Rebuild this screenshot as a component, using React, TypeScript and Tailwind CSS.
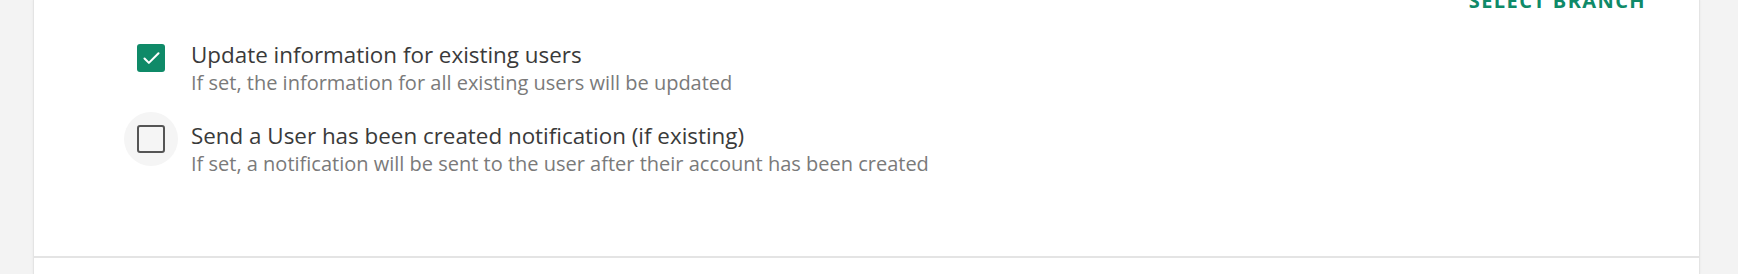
import { Check } from "lucide-react";

const options = [
  {
    id: "update",
    label: "Update information for existing users",
    hint: "If set, the information for all existing users will be updated",
    checked: true,
  },
  {
    id: "notify",
    label: "Send a User has been created notification (if existing)",
    hint: "If set, a notification will be sent to the user after their account has been created",
    checked: false,
  },
];

export default function App() {
  return (
    <div className="h-[274px] overflow-hidden bg-[#f3f3f3] pl-[33px] pr-[38px] font-['Open_Sans',sans-serif]">
      <div className="flex h-[274px] flex-col border-x border-[#e4e4e4] bg-white shadow-[0_0_2px_rgba(0,0,0,0.06)]">
        {/* header action, mostly scrolled off */}
        <div className="-mt-[11px] flex h-[24px] justify-end pr-[53px]">
          <span className="text-[20px] font-bold leading-[24px] tracking-[0.07em] text-[#0f8a68]">
            SELECT BRANCH
          </span>
        </div>

        <div className="mt-[18px] flex flex-col gap-[15px] pl-[90px]">
          {options.map((opt) => (
            <div key={opt.id} className="flex items-start gap-[13px]">
              <div
                className={`flex h-[54px] w-[54px] shrink-0 items-center justify-center rounded-full ${
                  opt.checked ? "" : "bg-[#f5f5f5]"
                }`}
              >
                {opt.checked ? (
                  <div className="flex h-[28px] w-[28px] items-center justify-center rounded-[3px] bg-[#0f8a68]">
                    <Check className="h-[21px] w-[21px] text-white" strokeWidth={2.4} />
                  </div>
                ) : (
                  <div className="h-[28px] w-[28px] rounded-[3px] border-2 border-[#555]" />
                )}
              </div>
              <div className="mt-[10px]">
                <div className="text-[22.4px] leading-[28px] text-[#3a3a3a]">{opt.label}</div>
                <div className="text-[20px] leading-[28px] text-[#7a7a7a]">{opt.hint}</div>
              </div>
            </div>
          ))}
        </div>

        <div className="mt-auto mb-[16px] h-[2px] bg-[#e4e4e4]" />
      </div>
    </div>
  );
}
